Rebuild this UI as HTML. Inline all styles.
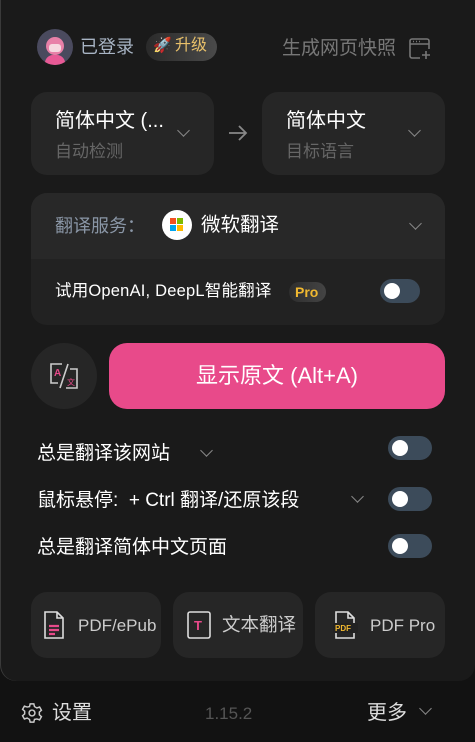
<!DOCTYPE html>
<html><head><meta charset="utf-8"><style>
*{margin:0;padding:0;box-sizing:border-box}
body{width:475px;height:742px;background:#121212;font-family:"Liberation Sans","Noto Sans CJK SC",sans-serif;position:relative;overflow:hidden}
.panel{position:absolute;left:0;top:0;width:475px;height:681px;background:#1a1a1a;box-shadow:inset 1px 0 0 #3a3a3a;border-radius:0 0 16px 16px}
.abs{position:absolute}
.card{position:absolute;background:#262626;border-radius:16px}
.chev{position:absolute;width:9px;height:9px;border-right:1.6px solid #888;border-bottom:1.6px solid #888;transform:rotate(45deg)}
.tog{position:absolute;width:44px;height:24px;border-radius:12px;background:#3c4b5a}
.tog:after{content:"";position:absolute;left:4px;top:4px;width:16px;height:16px;border-radius:50%;background:#fff}
.t{position:absolute;white-space:nowrap;line-height:1}
</style></head><body>
<div class="panel">
 <div class="abs" style="left:37px;top:29px;width:36px;height:36px;border-radius:50%;background:#4a4a5e;overflow:hidden">
  <div class="abs" style="left:9px;top:8px;width:18px;height:18px;border-radius:50%;background:#e880a8"></div>
  <div class="abs" style="left:12px;top:15px;width:12px;height:8px;border-radius:3px;background:#f6d8e0"></div>
  <div class="abs" style="left:8px;top:26px;width:20px;height:10px;border-radius:8px 8px 0 0;background:#e85a96"></div>
 </div>
 <div class="t" style="left:80px;top:38px;font-size:18px;color:#a8b4c4">已登录</div>
 <div class="abs" style="left:146px;top:33px;width:71px;height:28px;border-radius:14px;background:linear-gradient(90deg,#2a2a2a,#4a4a4a)"></div>
 <div class="t" style="left:153px;top:38px;font-size:15px;color:#f5c04a">🚀</div>
 <div class="t" style="left:175px;top:38px;font-size:16px;color:#e8c06a">升级</div>
 <div class="t" style="left:282px;top:39px;font-size:19px;color:#777">生成网页快照</div>
 <svg class="abs" style="left:408px;top:37px" width="24" height="24" viewBox="0 0 24 24" fill="none" stroke="#777" stroke-width="1.6"><path d="M12 21H4a2 2 0 0 1-2-2V4a2 2 0 0 1 2-2h15a2 2 0 0 1 2 2v8M2 7h19M5 4.5h1M8 4.5h1M11 4.5h1M18 14v8M14 18h8"/></svg>

 <div class="card" style="left:31px;top:92px;width:183px;height:83px"></div>
 <div class="t" style="left:55px;top:111px;font-size:20px;color:#fff">简体中文 (...</div>
 <div class="t" style="left:55px;top:143px;font-size:17px;color:#666">自动检测</div>
 <div class="chev" style="left:179px;top:126px"></div>
 <svg class="abs" style="left:228px;top:124px" width="20" height="18" viewBox="0 0 20 18" fill="none" stroke="#888" stroke-width="1.8"><path d="M1 9h17M11 2l7 7-7 7"/></svg>
 <div class="card" style="left:262px;top:92px;width:183px;height:83px"></div>
 <div class="t" style="left:286px;top:111px;font-size:20px;color:#fff">简体中文</div>
 <div class="t" style="left:286px;top:143px;font-size:17px;color:#666">目标语言</div>
 <div class="chev" style="left:410px;top:126px"></div>

 <div class="card" style="left:31px;top:193px;width:414px;height:132px;background:#222;overflow:hidden"><div style="height:66px;background:#282828"></div></div>
 <div class="t" style="left:55px;top:217px;font-size:18px;color:#8a96a6">翻译服务：</div>
 <div class="abs" style="left:162px;top:210px;width:30px;height:30px;border-radius:50%;background:#fff">
  <div class="abs" style="left:8px;top:8px;width:6px;height:6px;background:#f25022"></div>
  <div class="abs" style="left:15px;top:8px;width:6px;height:6px;background:#7fba00"></div>
  <div class="abs" style="left:8px;top:15px;width:6px;height:6px;background:#00a4ef"></div>
  <div class="abs" style="left:15px;top:15px;width:6px;height:6px;background:#ffb900"></div>
 </div>
 <div class="t" style="left:201px;top:216px;font-size:19.5px;color:#fff">微软翻译</div>
 <div class="chev" style="left:411px;top:219px"></div>
 <div class="t" style="left:55px;top:283px;font-size:16.5px;color:#fff;letter-spacing:0.2px">试用OpenAI, DeepL智能翻译</div>
 <div class="abs" style="left:289px;top:282px;width:37px;height:20px;border-radius:10px;background:linear-gradient(90deg,#2e2e2e,#444)"></div>
 <div class="t" style="left:295px;top:285px;font-size:14px;font-weight:bold;color:#f0b830">Pro</div>
 <div class="tog" style="left:380px;top:279px;width:40px"></div>

 <div class="abs" style="left:31px;top:343px;width:66px;height:66px;border-radius:50%;background:#262626"></div>
 <svg class="abs" style="left:48px;top:360px" width="32" height="32" viewBox="0 0 32 32" fill="none" stroke="#ccc" stroke-width="1.6"><path d="M14 4H3v19h7M18 28h11V9h-7M20 4L12 28"/><text x="6" y="16" font-size="10" fill="#e84a8a" stroke="none" font-family="Liberation Sans" font-weight="bold">A</text><text x="19" y="25" font-size="8" fill="#e84a8a" stroke="none" font-family="Noto Sans CJK SC">文</text></svg>
 <div class="abs" style="left:109px;top:343px;width:336px;height:66px;border-radius:18px;background:#e84a8a"></div>
 <div class="t" style="left:109px;top:365px;width:336px;text-align:center;font-size:22px;color:#fff">显示原文 (Alt+A)</div>

 <div class="t" style="left:37px;top:444px;font-size:19px;color:#fff">总是翻译该网站</div>
 <div class="chev" style="left:202px;top:446px"></div>
 <div class="tog" style="left:388px;top:436px"></div>
 <div class="t" style="left:37px;top:491px;font-size:19px;color:#fff">鼠标悬停:&nbsp; + Ctrl 翻译/还原该段</div>
 <div class="chev" style="left:353px;top:492px"></div>
 <div class="tog" style="left:388px;top:487px"></div>
 <div class="t" style="left:37px;top:538px;font-size:19px;color:#fff">总是翻译简体中文页面</div>
 <div class="tog" style="left:388px;top:534px"></div>

 <div class="card" style="left:31px;top:592px;width:130px;height:66px"></div>
 <svg class="abs" style="left:42px;top:610px" width="24" height="30" viewBox="0 0 24 30" fill="none" stroke="#ddd" stroke-width="1.6"><path d="M3 2h12l6 6v20H3z M15 2v6h6"/><path d="M7 16h10M7 20h10M7 24h6" stroke="#e84a8a" stroke-width="2.2"/></svg>
 <div class="t" style="left:78px;top:617px;font-size:17px;color:#ccc">PDF/ePub</div>
 <div class="card" style="left:173px;top:592px;width:130px;height:66px"></div>
 <svg class="abs" style="left:186px;top:610px" width="26" height="30" viewBox="0 0 26 30" fill="none"><rect x="2" y="2" width="22" height="26" rx="2" stroke="#ddd" stroke-width="1.6"/><text x="8" y="20" font-size="13" font-weight="bold" fill="#e84a8a" font-family="Liberation Sans">T</text></svg>
 <div class="t" style="left:222px;top:616px;font-size:18.5px;color:#ccc">文本翻译</div>
 <div class="card" style="left:315px;top:592px;width:130px;height:66px"></div>
 <svg class="abs" style="left:333px;top:610px" width="26" height="30" viewBox="0 0 26 30" fill="none"><path d="M3 2h12l6 6v20H3z M15 2v6h6" stroke="#ddd" stroke-width="1.6"/><rect x="0" y="13" width="25" height="10" fill="#222"/><text x="2" y="21" font-size="8" font-weight="bold" fill="#f0b830" font-family="Liberation Sans">PDF</text></svg>
 <div class="t" style="left:370px;top:617px;font-size:17px;color:#ccc">PDF Pro</div>
</div>

<svg class="abs" style="left:21px;top:702px" width="22" height="22" viewBox="0 0 24 24" fill="none" stroke="#ccc" stroke-width="1.6"><circle cx="12" cy="12" r="3.2"/><path d="M10 2h4l.7 3 2.6 1.5 3-1 2 3.5-2.3 2v3l2.3 2-2 3.5-3-1L14.7 19 14 22h-4l-.7-3-2.6-1.5-3 1-2-3.5 2.3-2v-3L1.7 8l2-3.5 3 1L9.3 5z"/></svg>
<div class="t" style="left:52px;top:703px;font-size:20px;color:#ddd">设置</div>
<div class="t" style="left:205px;top:705px;font-size:17px;color:#555">1.15.2</div>
<div class="t" style="left:367px;top:703px;font-size:20px;color:#ddd">更多</div>
<div class="chev" style="left:421px;top:704px"></div>
</body></html>
